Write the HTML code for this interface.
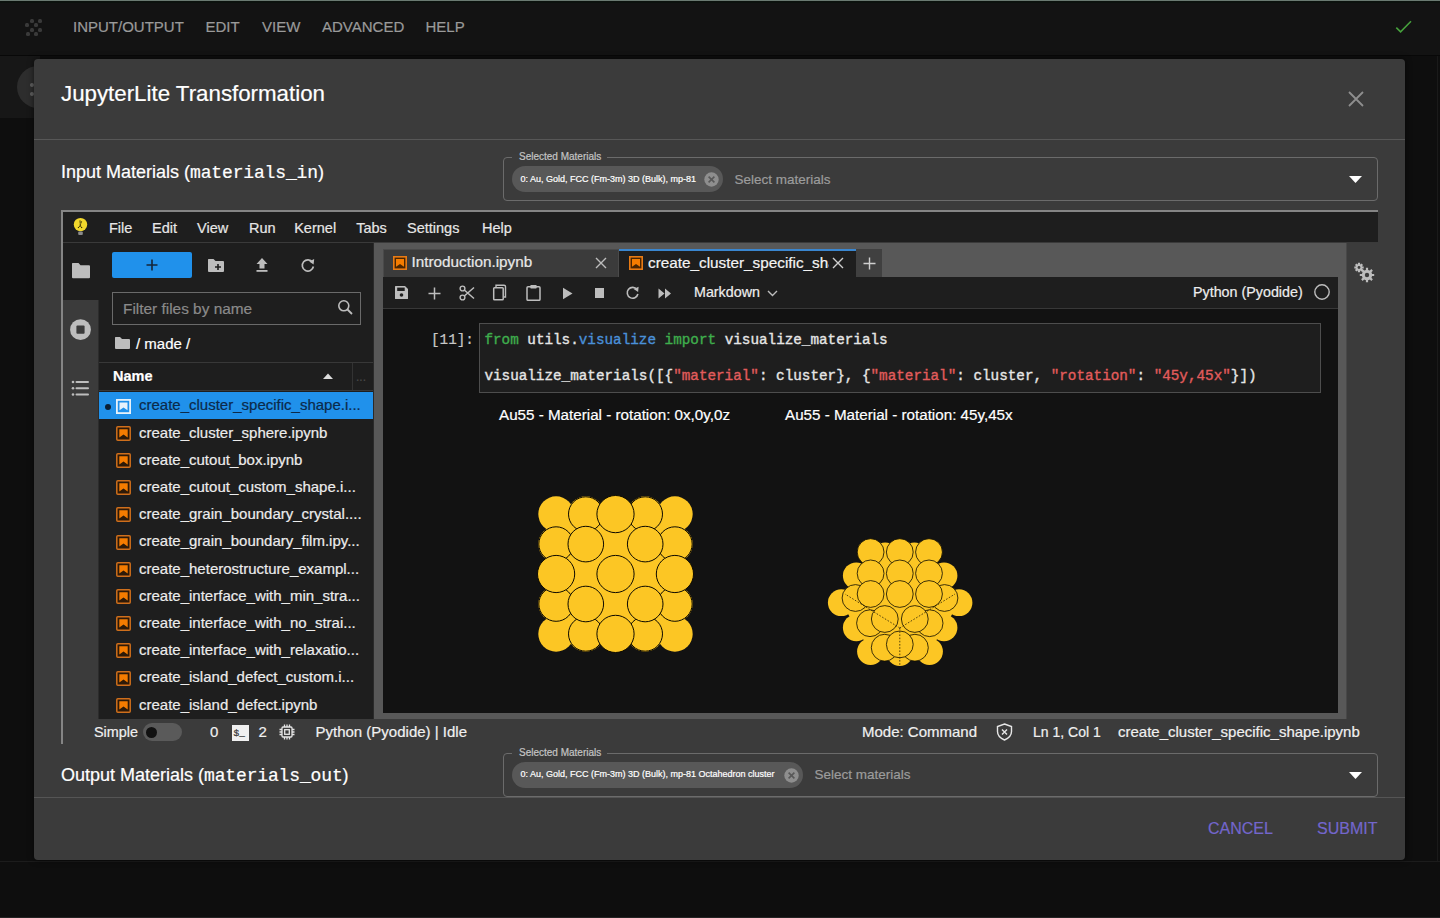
<!DOCTYPE html>
<html><head><meta charset="utf-8"><style>
html,body{margin:0;padding:0;width:1440px;height:918px;overflow:hidden;background:#101010}
.a{position:absolute;box-sizing:border-box}
.t{white-space:pre;-webkit-text-stroke:0.2px currentColor}
</style></head><body>
<div class="a" style="left:0px;top:0px;width:1440px;height:918px;background:#0e0e0e;"></div>
<div class="a" style="left:0px;top:0px;width:1440px;height:55px;background:#131313;"></div>
<div class="a" style="left:0px;top:55px;width:1440px;height:1px;background:#080808;"></div>
<div class="a" style="left:0px;top:0px;width:1440px;height:1px;background:#6b7a72;"></div>
<div class="a" style="left:0px;top:1px;width:1440px;height:2px;background:#0c120e;"></div>
<div class="a" style="left:0px;top:56px;width:40px;height:62px;background:#171717;"></div>
<div class="a" style="left:29.5px;top:18.7px;width:4px;height:4px;background:#3a3a3a;border-radius:1.5px"></div>
<div class="a" style="left:38.4px;top:18.5px;width:4px;height:4px;background:#3a3a3a;border-radius:1.5px"></div>
<div class="a" style="left:25.4px;top:22.9px;width:4px;height:4px;background:#3a3a3a;border-radius:1.5px"></div>
<div class="a" style="left:33.9px;top:23.1px;width:4px;height:4px;background:#3a3a3a;border-radius:1.5px"></div>
<div class="a" style="left:29.9px;top:27.8px;width:4px;height:4px;background:#3a3a3a;border-radius:1.5px"></div>
<div class="a" style="left:38.4px;top:27.8px;width:4px;height:4px;background:#3a3a3a;border-radius:1.5px"></div>
<div class="a" style="left:25.5px;top:32px;width:4px;height:4px;background:#3a3a3a;border-radius:1.5px"></div>
<div class="a" style="left:34.3px;top:32px;width:4px;height:4px;background:#3a3a3a;border-radius:1.5px"></div>
<div class="a t" style="left:73px;top:19.30px;font:normal 15px/15px 'Liberation Sans', sans-serif;color:#9a9a9a;">INPUT/OUTPUT</div>
<div class="a t" style="left:205.5px;top:19.30px;font:normal 15px/15px 'Liberation Sans', sans-serif;color:#9a9a9a;">EDIT</div>
<div class="a t" style="left:262px;top:19.30px;font:normal 15px/15px 'Liberation Sans', sans-serif;color:#9a9a9a;">VIEW</div>
<div class="a t" style="left:322px;top:19.30px;font:normal 15px/15px 'Liberation Sans', sans-serif;color:#9a9a9a;">ADVANCED</div>
<div class="a t" style="left:425.5px;top:19.30px;font:normal 15px/15px 'Liberation Sans', sans-serif;color:#9a9a9a;">HELP</div>
<svg class="a" style="left:1393px;top:18px" width="22" height="18" viewBox="0 0 22 18"><path d="M3.3 9.6 L7.6 13.8 L18 3.3" fill="none" stroke="#46a03c" stroke-width="1.6"/></svg>
<div class="a" style="left:17px;top:66px;width:42px;height:42px;background:#2d2d2d;border-radius:50%"></div>
<div class="a" style="left:29.7px;top:82.8px;width:4px;height:4px;background:#626262;border-radius:50%"></div>
<div class="a" style="left:29.7px;top:91.6px;width:4px;height:4px;background:#626262;border-radius:50%"></div>
<div class="a" style="left:0px;top:861px;width:1440px;height:1px;background:#1c1c1c;"></div>
<div class="a" style="left:1437px;top:56px;width:1px;height:805px;background:#1a1a1a;"></div>
<div class="a" style="left:0px;top:917px;width:1440px;height:1px;background:#242424;"></div>
<div class="a" style="left:34px;top:59px;width:1371px;height:801px;background:#3b3b3b;border-radius:4px;box-shadow:0 0 6px rgba(0,0,0,.6)"></div>
<div class="a t" style="left:61px;top:83.42px;font:normal 22.3px/22.3px 'Liberation Sans', sans-serif;color:#ffffff;">JupyterLite Transformation</div>
<svg class="a" style="left:1347px;top:90px" width="18" height="18" viewBox="0 0 18 18"><path d="M2 2 L16 16 M16 2 L2 16" stroke="#8e8e8e" stroke-width="1.8"/></svg>
<div class="a" style="left:34px;top:139px;width:1371px;height:1px;background:#575757;"></div>
<div class="a t" style="left:61px;top:162.76px;font:18px/18px 'Liberation Sans', sans-serif;color:#fff">Input Materials (<span style="font:18px/18px 'Liberation Mono', monospace;letter-spacing:-0.15px">materials_in</span>)</div>
<div class="a" style="left:503px;top:157px;width:875px;height:44px;border:1px solid #6b6b6b;border-radius:4px"></div>
<div class="a" style="left:512px;top:154px;width:95px;height:6px;background:#3c3c3c;"></div>
<div class="a t" style="left:519px;top:151.53px;font:normal 10px/10px 'Liberation Sans', sans-serif;color:#c4c4c4;">Selected Materials</div>
<div class="a" style="left:512px;top:166px;width:211px;height:26px;background:#585858;border-radius:13px"></div>
<div class="a t" style="left:520.5px;top:175.08px;font:normal 9px/9px 'Liberation Sans', sans-serif;color:#ffffff;letter-spacing:0px">0: Au, Gold, FCC (Fm-3m) 3D (Bulk), mp-81</div>
<svg class="a" style="left:703.5px;top:171.5px" width="15" height="15" viewBox="0 0 15 15"><circle cx="7.5" cy="7.5" r="7.2" fill="#8e8e8e"/><path d="M4.6 4.6 L10.4 10.4 M10.4 4.6 L4.6 10.4" stroke="#585858" stroke-width="1.6"/></svg>
<div class="a t" style="left:734.5px;top:173.07px;font:normal 13.5px/13.5px 'Liberation Sans', sans-serif;color:#9c9c9c;">Select materials</div>
<svg class="a" style="left:1349px;top:175.5px" width="13" height="7" viewBox="0 0 13 7"><path d="M0 0 L13 0 L6.5 7 Z" fill="#fff"/></svg>
<div class="a t" style="left:61px;top:765.76px;font:18px/18px 'Liberation Sans', sans-serif;color:#fff">Output Materials (<span style="font:18px/18px 'Liberation Mono', monospace;letter-spacing:-0.15px">materials_out</span>)</div>
<div class="a" style="left:503px;top:753px;width:875px;height:44px;border:1px solid #6b6b6b;border-radius:4px"></div>
<div class="a" style="left:512px;top:750px;width:95px;height:6px;background:#3c3c3c;"></div>
<div class="a t" style="left:519px;top:747.53px;font:normal 10px/10px 'Liberation Sans', sans-serif;color:#c4c4c4;">Selected Materials</div>
<div class="a" style="left:512px;top:762px;width:291px;height:26px;background:#585858;border-radius:13px"></div>
<div class="a t" style="left:520.5px;top:770.08px;font:normal 9px/9px 'Liberation Sans', sans-serif;color:#ffffff;letter-spacing:0px">0: Au, Gold, FCC (Fm-3m) 3D (Bulk), mp-81 Octahedron cluster</div>
<svg class="a" style="left:783.5px;top:767.5px" width="15" height="15" viewBox="0 0 15 15"><circle cx="7.5" cy="7.5" r="7.2" fill="#8e8e8e"/><path d="M4.6 4.6 L10.4 10.4 M10.4 4.6 L4.6 10.4" stroke="#585858" stroke-width="1.6"/></svg>
<div class="a t" style="left:814.5px;top:768.07px;font:normal 13.5px/13.5px 'Liberation Sans', sans-serif;color:#9c9c9c;">Select materials</div>
<svg class="a" style="left:1349px;top:771.5px" width="13" height="7" viewBox="0 0 13 7"><path d="M0 0 L13 0 L6.5 7 Z" fill="#fff"/></svg>
<div class="a" style="left:34px;top:797px;width:1371px;height:1px;background:#555555;"></div>
<div class="a t" style="left:1208px;top:821.16px;font:normal 16px/16px 'Liberation Sans', sans-serif;color:#7366cc;">CANCEL</div>
<div class="a t" style="left:1317px;top:821.16px;font:normal 16px/16px 'Liberation Sans', sans-serif;color:#7366cc;">SUBMIT</div>
<div class="a" style="left:61px;top:210px;width:2px;height:534px;background:#858585;"></div>
<div class="a" style="left:61px;top:210px;width:1317px;height:2px;background:#858585;"></div>
<div class="a" style="left:63px;top:212px;width:1315px;height:30px;background:#1e1e1e;"></div>
<div class="a" style="left:63px;top:242px;width:1315px;height:1px;background:#3a3a3a;"></div>
<svg class="a" style="left:72px;top:217px" width="18" height="20" viewBox="0 0 18 20"><circle cx="8.5" cy="7.6" r="6.7" fill="#f2d82c"/><rect x="6.2" y="14.6" width="4.6" height="3.4" rx="1" fill="#8a8a8a"/><path d="M8 3.5 L8.3 8.5 L6 11 M8.3 8.5 L10 11 M9.7 4.5 L8.7 6.5" stroke="#2a2200" stroke-width="1.1" stroke-dasharray="1.2,0.6" fill="none"/></svg>
<div class="a t" style="left:109.0px;top:221.23px;font:normal 14.5px/14.5px 'Liberation Sans', sans-serif;color:#e6e6e6;">File</div>
<div class="a t" style="left:152.0px;top:221.23px;font:normal 14.5px/14.5px 'Liberation Sans', sans-serif;color:#e6e6e6;">Edit</div>
<div class="a t" style="left:197.0px;top:221.23px;font:normal 14.5px/14.5px 'Liberation Sans', sans-serif;color:#e6e6e6;">View</div>
<div class="a t" style="left:249.0px;top:221.23px;font:normal 14.5px/14.5px 'Liberation Sans', sans-serif;color:#e6e6e6;">Run</div>
<div class="a t" style="left:294.2px;top:221.23px;font:normal 14.5px/14.5px 'Liberation Sans', sans-serif;color:#e6e6e6;">Kernel</div>
<div class="a t" style="left:356.2px;top:221.23px;font:normal 14.5px/14.5px 'Liberation Sans', sans-serif;color:#e6e6e6;">Tabs</div>
<div class="a t" style="left:407.0px;top:221.23px;font:normal 14.5px/14.5px 'Liberation Sans', sans-serif;color:#e6e6e6;">Settings</div>
<div class="a t" style="left:482.0px;top:221.23px;font:normal 14.5px/14.5px 'Liberation Sans', sans-serif;color:#e6e6e6;">Help</div>
<div class="a" style="left:63px;top:243px;width:36px;height:476px;background:#3b3b3b;"></div>
<div class="a" style="left:63px;top:243px;width:36px;height:57px;background:#1e1e1e;"></div>
<div class="a" style="left:98px;top:300px;width:1px;height:419px;background:#2c2c2c;"></div>
<div class="a" style="left:99px;top:243px;width:275px;height:476px;background:#1e1e1e;"></div>
<div class="a" style="left:374px;top:243px;width:972px;height:476px;background:#585858;"></div>
<div class="a" style="left:1346px;top:243px;width:32px;height:476px;background:#3b3b3b;"></div>
<div class="a" style="left:1346px;top:243px;width:1px;height:476px;background:#484848;"></div>
<svg class="a" style="left:71px;top:262px" width="20" height="17" viewBox="0 0 20 17"><path d="M1.5 1 H7.5 L9.5 3.2 H18 Q19 3.2 19 4.2 V15.2 Q19 16.2 18 16.2 H2 Q1 16.2 1 15.2 V2 Q1 1 1.5 1 Z" fill="#bdbdbd"/></svg>
<svg class="a" style="left:70px;top:319px" width="22" height="22" viewBox="0 0 22 22"><circle cx="10.5" cy="10.7" r="10.4" fill="#bdbdbd"/><rect x="6.4" y="6.6" width="8.2" height="8.2" rx="1" fill="#3b3b3b"/></svg>
<svg class="a" style="left:71px;top:380px" width="19" height="17" viewBox="0 0 19 17"><g fill="#bdbdbd"><circle cx="2" cy="2" r="1.3"/><circle cx="2" cy="8.2" r="1.3"/><circle cx="2" cy="14.5" r="1.3"/><rect x="4.5" y="1" width="13.5" height="2" rx="1"/><rect x="4.5" y="7.2" width="13.5" height="2" rx="1"/><rect x="4.5" y="13.5" width="13.5" height="2" rx="1"/></g></svg>
<div class="a" style="left:112px;top:252px;width:80px;height:26px;background:#2091eb;border-radius:2px"></div>
<svg class="a" style="left:146px;top:259px" width="12" height="12" viewBox="0 0 12 12"><path d="M6 0.5 V11.5 M0.5 6 H11.5" stroke="#15263a" stroke-width="1.6"/></svg>
<svg class="a" style="left:207px;top:258px" width="18" height="15" viewBox="0 0 18 15"><path d="M1.5 1 H6.5 L8.5 3 H16 Q17 3 17 4 V13 Q17 14 16 14 H2 Q1 14 1 13 V2 Q1 1 1.5 1 Z" fill="#bdbdbd"/><path d="M11 6 V12 M8 9 H14" stroke="#1e1e1e" stroke-width="1.6"/></svg>
<svg class="a" style="left:255px;top:257px" width="14" height="16" viewBox="0 0 14 16"><path d="M7 1 L1.5 7 H4.5 V11.5 H9.5 V7 H12.5 Z" fill="#bdbdbd"/><rect x="1.5" y="13" width="11" height="1.8" fill="#bdbdbd"/></svg>
<svg class="a" style="left:300px;top:257px" width="16" height="16" viewBox="0 0 16 16"><path d="M12.5 5.2 A5.6 5.6 0 1 0 13.4 9.5" fill="none" stroke="#bdbdbd" stroke-width="1.7"/><path d="M9.2 4.5 L14.2 2 L13.6 7.4 Z" fill="#bdbdbd"/></svg>
<div class="a" style="left:112px;top:292px;width:249px;height:33px;border:1px solid #6a6a6a"></div>
<div class="a t" style="left:123px;top:300.96px;font:normal 15.4px/15.4px 'Liberation Sans', sans-serif;color:#8a8a8a;">Filter files by name</div>
<svg class="a" style="left:337px;top:299px" width="17" height="17" viewBox="0 0 17 17"><circle cx="6.8" cy="6.8" r="5" fill="none" stroke="#bdbdbd" stroke-width="1.6"/><path d="M10.5 10.5 L15 15" stroke="#bdbdbd" stroke-width="1.8"/></svg>
<svg class="a" style="left:114px;top:336px" width="17" height="14" viewBox="0 0 17 14"><path d="M1.5 1 H6 L8 3 H15 Q16 3 16 4 V12 Q16 13 15 13 H2 Q1 13 1 12 V2 Q1 1 1.5 1 Z" fill="#bdbdbd"/></svg>
<div class="a t" style="left:136px;top:336.10px;font:normal 15px/15px 'Liberation Sans', sans-serif;color:#ffffff;">/ made /</div>
<div class="a" style="left:99px;top:362px;width:275px;height:1px;background:#383838;"></div>
<div class="a" style="left:99px;top:390px;width:275px;height:1px;background:#383838;"></div>
<div class="a t" style="left:113px;top:369.23px;font:bold 14.5px/14.5px 'Liberation Sans', sans-serif;color:#ffffff;">Name</div>
<svg class="a" style="left:323px;top:373px" width="10" height="6" viewBox="0 0 10 6"><path d="M0 6 L5 0.5 L10 6 Z" fill="#dcdcdc"/></svg>
<div class="a" style="left:352px;top:363px;width:1px;height:27px;background:#333;"></div>
<div class="a t" style="left:356px;top:370.84px;font:normal 12px/12px 'Liberation Sans', sans-serif;color:#4a4a4a;">...</div>
<div class="a" style="left:99px;top:391.9px;width:275px;height:27.2px;background:#2091eb;"></div>
<div class="a" style="left:105px;top:403.59999999999997px;width:6px;height:6px;background:#0a1f36;border-radius:50%"></div>
<svg class="a" style="left:116px;top:398.5px" width="15" height="15" viewBox="0 0 15 15"><rect x="0.9" y="0.9" width="13.2" height="13.2" fill="none" stroke="#e8f2fb" stroke-width="1.8"/><path d="M3.5 3.5 H11.5 V11.3 L7.5 8.6 L3.5 11.3 Z" fill="#e8f2fb"/></svg>
<div class="a t" style="left:139px;top:397.30px;font:normal 15px/15px 'Liberation Sans', sans-serif;color:#0c2a4a;">create_cluster_specific_shape.i...</div>
<svg class="a" style="left:116px;top:425.7px" width="15" height="15" viewBox="0 0 15 15"><rect x="0.8" y="0.8" width="13.4" height="13.4" rx="1" fill="#2e1a08" stroke="#cf6f1c" stroke-width="1.5"/><path d="M3.3 3.3 H11.7 V11.5 L7.5 8.4 L3.3 11.5 Z" fill="#f57c00"/></svg>
<div class="a t" style="left:139px;top:424.50px;font:normal 15px/15px 'Liberation Sans', sans-serif;color:#ececec;">create_cluster_sphere.ipynb</div>
<svg class="a" style="left:116px;top:452.9px" width="15" height="15" viewBox="0 0 15 15"><rect x="0.8" y="0.8" width="13.4" height="13.4" rx="1" fill="#2e1a08" stroke="#cf6f1c" stroke-width="1.5"/><path d="M3.3 3.3 H11.7 V11.5 L7.5 8.4 L3.3 11.5 Z" fill="#f57c00"/></svg>
<div class="a t" style="left:139px;top:451.70px;font:normal 15px/15px 'Liberation Sans', sans-serif;color:#ececec;">create_cutout_box.ipynb</div>
<svg class="a" style="left:116px;top:480.1px" width="15" height="15" viewBox="0 0 15 15"><rect x="0.8" y="0.8" width="13.4" height="13.4" rx="1" fill="#2e1a08" stroke="#cf6f1c" stroke-width="1.5"/><path d="M3.3 3.3 H11.7 V11.5 L7.5 8.4 L3.3 11.5 Z" fill="#f57c00"/></svg>
<div class="a t" style="left:139px;top:478.90px;font:normal 15px/15px 'Liberation Sans', sans-serif;color:#ececec;">create_cutout_custom_shape.i...</div>
<svg class="a" style="left:116px;top:507.3px" width="15" height="15" viewBox="0 0 15 15"><rect x="0.8" y="0.8" width="13.4" height="13.4" rx="1" fill="#2e1a08" stroke="#cf6f1c" stroke-width="1.5"/><path d="M3.3 3.3 H11.7 V11.5 L7.5 8.4 L3.3 11.5 Z" fill="#f57c00"/></svg>
<div class="a t" style="left:139px;top:506.10px;font:normal 15px/15px 'Liberation Sans', sans-serif;color:#ececec;">create_grain_boundary_crystal....</div>
<svg class="a" style="left:116px;top:534.5px" width="15" height="15" viewBox="0 0 15 15"><rect x="0.8" y="0.8" width="13.4" height="13.4" rx="1" fill="#2e1a08" stroke="#cf6f1c" stroke-width="1.5"/><path d="M3.3 3.3 H11.7 V11.5 L7.5 8.4 L3.3 11.5 Z" fill="#f57c00"/></svg>
<div class="a t" style="left:139px;top:533.30px;font:normal 15px/15px 'Liberation Sans', sans-serif;color:#ececec;">create_grain_boundary_film.ipy...</div>
<svg class="a" style="left:116px;top:561.7px" width="15" height="15" viewBox="0 0 15 15"><rect x="0.8" y="0.8" width="13.4" height="13.4" rx="1" fill="#2e1a08" stroke="#cf6f1c" stroke-width="1.5"/><path d="M3.3 3.3 H11.7 V11.5 L7.5 8.4 L3.3 11.5 Z" fill="#f57c00"/></svg>
<div class="a t" style="left:139px;top:560.50px;font:normal 15px/15px 'Liberation Sans', sans-serif;color:#ececec;">create_heterostructure_exampl...</div>
<svg class="a" style="left:116px;top:588.9px" width="15" height="15" viewBox="0 0 15 15"><rect x="0.8" y="0.8" width="13.4" height="13.4" rx="1" fill="#2e1a08" stroke="#cf6f1c" stroke-width="1.5"/><path d="M3.3 3.3 H11.7 V11.5 L7.5 8.4 L3.3 11.5 Z" fill="#f57c00"/></svg>
<div class="a t" style="left:139px;top:587.70px;font:normal 15px/15px 'Liberation Sans', sans-serif;color:#ececec;">create_interface_with_min_stra...</div>
<svg class="a" style="left:116px;top:616.1px" width="15" height="15" viewBox="0 0 15 15"><rect x="0.8" y="0.8" width="13.4" height="13.4" rx="1" fill="#2e1a08" stroke="#cf6f1c" stroke-width="1.5"/><path d="M3.3 3.3 H11.7 V11.5 L7.5 8.4 L3.3 11.5 Z" fill="#f57c00"/></svg>
<div class="a t" style="left:139px;top:614.90px;font:normal 15px/15px 'Liberation Sans', sans-serif;color:#ececec;">create_interface_with_no_strai...</div>
<svg class="a" style="left:116px;top:643.3px" width="15" height="15" viewBox="0 0 15 15"><rect x="0.8" y="0.8" width="13.4" height="13.4" rx="1" fill="#2e1a08" stroke="#cf6f1c" stroke-width="1.5"/><path d="M3.3 3.3 H11.7 V11.5 L7.5 8.4 L3.3 11.5 Z" fill="#f57c00"/></svg>
<div class="a t" style="left:139px;top:642.10px;font:normal 15px/15px 'Liberation Sans', sans-serif;color:#ececec;">create_interface_with_relaxatio...</div>
<svg class="a" style="left:116px;top:670.5px" width="15" height="15" viewBox="0 0 15 15"><rect x="0.8" y="0.8" width="13.4" height="13.4" rx="1" fill="#2e1a08" stroke="#cf6f1c" stroke-width="1.5"/><path d="M3.3 3.3 H11.7 V11.5 L7.5 8.4 L3.3 11.5 Z" fill="#f57c00"/></svg>
<div class="a t" style="left:139px;top:669.30px;font:normal 15px/15px 'Liberation Sans', sans-serif;color:#ececec;">create_island_defect_custom.i...</div>
<svg class="a" style="left:116px;top:697.7px" width="15" height="15" viewBox="0 0 15 15"><rect x="0.8" y="0.8" width="13.4" height="13.4" rx="1" fill="#2e1a08" stroke="#cf6f1c" stroke-width="1.5"/><path d="M3.3 3.3 H11.7 V11.5 L7.5 8.4 L3.3 11.5 Z" fill="#f57c00"/></svg>
<div class="a t" style="left:139px;top:696.50px;font:normal 15px/15px 'Liberation Sans', sans-serif;color:#ececec;">create_island_defect.ipynb</div>
<div class="a" style="left:373px;top:243px;width:1px;height:476px;background:#2a2a2a;"></div>
<div class="a" style="left:383px;top:249px;width:236px;height:28px;background:#3b3b3b;"></div>
<div class="a" style="left:383px;top:249px;width:236px;height:28px;border:1px solid #4a4a4a;border-bottom:none"></div>
<svg class="a" style="left:392.5px;top:255.5px" width="14" height="14" viewBox="0 0 14 14"><rect x="0.8" y="0.8" width="12.4" height="12.4" fill="#4a2500" stroke="#e87b14" stroke-width="1.6"/><path d="M3 3 H11 V10.8 L7 8 L3 10.8 Z" fill="#f57c00"/></svg>
<div class="a t" style="left:411.5px;top:254.05px;font:normal 15.3px/15.3px 'Liberation Sans', sans-serif;color:#e8e8e8;">Introduction.ipynb</div>
<svg class="a" style="left:595px;top:257px" width="12" height="12" viewBox="0 0 12 12"><path d="M1 1 L11 11 M11 1 L1 11" stroke="#bdbdbd" stroke-width="1.4"/></svg>
<div class="a" style="left:619px;top:249px;width:237px;height:28px;background:#1e1e1e;"></div>
<div class="a" style="left:619px;top:249px;width:237px;height:2px;background:#3a86cf;"></div>
<svg class="a" style="left:628.5px;top:256px" width="14" height="14" viewBox="0 0 14 14"><rect x="0.8" y="0.8" width="12.4" height="12.4" fill="#4a2500" stroke="#e87b14" stroke-width="1.6"/><path d="M3 3 H11 V10.8 L7 8 L3 10.8 Z" fill="#f57c00"/></svg>
<div class="a" style="left:648px;top:252px;width:181px;height:22px;overflow:hidden"><div class="a t" style="left:0;top:3.3px;font:15.3px/15.3px 'Liberation Sans', sans-serif;color:#f4f4f4">create_cluster_specific_shape.ipynb</div></div>
<svg class="a" style="left:832px;top:257px" width="12" height="12" viewBox="0 0 12 12"><path d="M1 1 L11 11 M11 1 L1 11" stroke="#cfcfcf" stroke-width="1.4"/></svg>
<div class="a" style="left:856px;top:249px;width:26px;height:28px;background:#404040;"></div>
<svg class="a" style="left:862.5px;top:256.5px" width="13" height="13" viewBox="0 0 13 13"><path d="M6.5 0.5 V12.5 M0.5 6.5 H12.5" stroke="#cfcfcf" stroke-width="1.4"/></svg>
<div class="a" style="left:383px;top:277px;width:955px;height:436px;background:#121212;"></div>
<div class="a" style="left:383px;top:277px;width:955px;height:31px;background:#1e1e1e;"></div>
<div class="a" style="left:383px;top:308px;width:955px;height:1px;background:#383838;"></div>
<svg class="a" style="left:394px;top:285px" width="15" height="15" viewBox="0 0 15 15"><path d="M1.5 1 H11 L14 4 V13.5 Q14 14 13.5 14 H1.5 Q1 14 1 13.5 V1.5 Q1 1 1.5 1 Z" fill="#bdbdbd"/><rect x="3.2" y="2.6" width="7.5" height="3.4" fill="#1e1e1e"/><circle cx="7.5" cy="10" r="1.8" fill="#1e1e1e"/></svg>
<svg class="a" style="left:428px;top:287px" width="13" height="13" viewBox="0 0 13 13"><path d="M6.5 0.5 V12.5 M0.5 6.5 H12.5" stroke="#bdbdbd" stroke-width="1.5"/></svg>
<svg class="a" style="left:459px;top:285px" width="16" height="16" viewBox="0 0 16 16"><circle cx="3.5" cy="3.5" r="2.4" fill="none" stroke="#bdbdbd" stroke-width="1.4"/><circle cx="3.5" cy="12.5" r="2.4" fill="none" stroke="#bdbdbd" stroke-width="1.4"/><path d="M5.3 5 L15 13.5 M5.3 11 L15 2.5" stroke="#bdbdbd" stroke-width="1.5"/></svg>
<svg class="a" style="left:492px;top:284px" width="16" height="17" viewBox="0 0 16 17"><path d="M4 3 V1.2 H12 Q13.5 1.2 13.5 2.5 V13 H11.8" fill="none" stroke="#bdbdbd" stroke-width="1.4"/><rect x="1.7" y="3.8" width="9.5" height="12" rx="0.8" fill="none" stroke="#bdbdbd" stroke-width="1.5"/></svg>
<svg class="a" style="left:526px;top:284px" width="15" height="17" viewBox="0 0 15 17"><rect x="1" y="2.8" width="13" height="13.5" rx="1" fill="none" stroke="#bdbdbd" stroke-width="1.5"/><rect x="4.3" y="1" width="6.4" height="3.6" rx="0.8" fill="#bdbdbd"/></svg>
<svg class="a" style="left:562px;top:287px" width="11" height="13" viewBox="0 0 11 13"><path d="M1 0.8 L10.5 6.5 L1 12.2 Z" fill="#bdbdbd"/></svg>
<div class="a" style="left:594.5px;top:288px;width:9.5px;height:9.5px;background:#bdbdbd;"></div>
<svg class="a" style="left:625px;top:285px" width="15" height="15" viewBox="0 0 15 15"><path d="M12 4.6 A5.4 5.4 0 1 0 12.9 9" fill="none" stroke="#bdbdbd" stroke-width="1.6"/><path d="M8.6 4 L13.6 1.8 L13.1 7 Z" fill="#bdbdbd"/></svg>
<svg class="a" style="left:658px;top:287.5px" width="14" height="11" viewBox="0 0 14 11"><path d="M0.5 0.5 L6.5 5.5 L0.5 10.5 Z M7 0.5 L13 5.5 L7 10.5 Z" fill="#bdbdbd"/></svg>
<div class="a t" style="left:694px;top:285.40px;font:normal 14.3px/14.3px 'Liberation Sans', sans-serif;color:#ededed;">Markdown</div>
<svg class="a" style="left:767px;top:290px" width="11" height="7" viewBox="0 0 11 7"><path d="M1 1 L5.5 5.5 L10 1" fill="none" stroke="#bdbdbd" stroke-width="1.4"/></svg>
<div class="a t" style="left:1193px;top:285.40px;font:normal 14.3px/14.3px 'Liberation Sans', sans-serif;color:#ededed;">Python (Pyodide)</div>
<svg class="a" style="left:1313px;top:283px" width="18" height="18" viewBox="0 0 18 18"><circle cx="9" cy="9" r="7.2" fill="none" stroke="#bdbdbd" stroke-width="1.4"/></svg>
<svg class="a" style="left:1354px;top:262px" width="22" height="22" viewBox="0 0 22 22"><g fill="#bdbdbd"><circle cx="5" cy="5.5" r="3.3"/><circle cx="13" cy="13" r="5.2"/></g><g stroke="#bdbdbd" stroke-width="2.2"><path d="M5 0.8 V10.2 M0.3 5.5 H9.7 M1.7 2.2 L8.3 8.8 M8.3 2.2 L1.7 8.8"/><path d="M13 5.8 V20.2 M5.8 13 H20.2 M7.9 7.9 L18.1 18.1 M18.1 7.9 L7.9 18.1"/></g><circle cx="5" cy="5.5" r="1.4" fill="#3c3c3c"/><circle cx="13" cy="13" r="2.2" fill="#3c3c3c"/></svg>
<div class="a t" style="left:431px;top:332.54px;font:normal 14.3px/14.3px 'Liberation Mono', monospace;color:#c8c8c8;">[11]:</div>
<div class="a" style="left:479px;top:323px;width:842px;height:70px;background:#1e1e1e;border:1px solid #4d4d4d"></div>
<div class="a t" style="left:484.4px;top:332.54px;font:14.3px/14.3px 'Liberation Mono', monospace;color:#e6e6e6;-webkit-text-stroke:0.35px currentColor"><span style="color:#3fae4d">from</span><span style="color:#e6e6e6"> utils.</span><span style="color:#4a90d9">visualize</span><span style="color:#e6e6e6"> </span><span style="color:#3fae4d">import</span><span style="color:#e6e6e6"> visualize_materials</span></div>
<div class="a t" style="left:484.4px;top:369.04px;font:14.3px/14.3px 'Liberation Mono', monospace;color:#e6e6e6;-webkit-text-stroke:0.35px currentColor"><span style="color:#e6e6e6">visualize_materials([{</span><span style="color:#e25c5c">&quot;material&quot;</span><span style="color:#e6e6e6">: cluster}, {</span><span style="color:#e25c5c">&quot;material&quot;</span><span style="color:#e6e6e6">: cluster, </span><span style="color:#e25c5c">&quot;rotation&quot;</span><span style="color:#e6e6e6">: </span><span style="color:#e25c5c">&quot;45y,45x&quot;</span><span style="color:#e6e6e6">}])</span></div>
<div class="a t" style="left:499px;top:407.13px;font:normal 15.2px/15.2px 'Liberation Sans', sans-serif;color:#ffffff;">Au55 - Material - rotation: 0x,0y,0z</div>
<div class="a t" style="left:785px;top:407.13px;font:normal 15.2px/15.2px 'Liberation Sans', sans-serif;color:#ffffff;">Au55 - Material - rotation: 45y,45x</div>
<div class="a" style="left:557px;top:515px;width:118px;height:119px;background:#fcc624"></div>
<svg class="a" style="left:0;top:0" width="1440" height="918" viewBox="0 0 1440 918"><circle cx="556.1" cy="514.1" r="17.8" fill="#fcc624"/><circle cx="585.8" cy="514.1" r="17.8" fill="#fcc624"/><circle cx="645.2" cy="514.1" r="17.8" fill="#fcc624"/><circle cx="674.9" cy="514.1" r="17.8" fill="#fcc624"/><circle cx="556.1" cy="544.1" r="17.8" fill="#fcc624"/><circle cx="615.5" cy="544.1" r="17.8" fill="#fcc624"/><circle cx="674.9" cy="544.1" r="17.8" fill="#fcc624"/><circle cx="585.8" cy="574.0" r="17.8" fill="#fcc624"/><circle cx="645.2" cy="574.0" r="17.8" fill="#fcc624"/><circle cx="556.1" cy="604.0" r="17.8" fill="#fcc624"/><circle cx="615.5" cy="604.0" r="17.8" fill="#fcc624"/><circle cx="674.9" cy="604.0" r="17.8" fill="#fcc624"/><circle cx="556.1" cy="633.9" r="17.8" fill="#fcc624"/><circle cx="585.8" cy="633.9" r="17.8" fill="#fcc624"/><circle cx="645.2" cy="633.9" r="17.8" fill="#fcc624"/><circle cx="674.9" cy="633.9" r="17.8" fill="#fcc624"/><circle cx="585.8" cy="514.1" r="17.3" fill="#fcc624" stroke="#0d0a00" stroke-width="1"/><circle cx="645.2" cy="514.1" r="17.3" fill="#fcc624" stroke="#0d0a00" stroke-width="1"/><circle cx="556.1" cy="544.1" r="17.3" fill="#fcc624" stroke="#0d0a00" stroke-width="1"/><circle cx="674.9" cy="544.1" r="17.3" fill="#fcc624" stroke="#0d0a00" stroke-width="1"/><circle cx="556.1" cy="604.0" r="17.3" fill="#fcc624" stroke="#0d0a00" stroke-width="1"/><circle cx="674.9" cy="604.0" r="17.3" fill="#fcc624" stroke="#0d0a00" stroke-width="1"/><circle cx="585.8" cy="633.9" r="17.3" fill="#fcc624" stroke="#0d0a00" stroke-width="1"/><circle cx="645.2" cy="633.9" r="17.3" fill="#fcc624" stroke="#0d0a00" stroke-width="1"/><circle cx="615.5" cy="633.9" r="18.6" fill="#fcc624" stroke="#0d0a00" stroke-width="1"/><circle cx="645.2" cy="544.1" r="17.8" fill="#fcc624" stroke="#0d0a00" stroke-width="1"/><circle cx="585.8" cy="544.1" r="17.8" fill="#fcc624" stroke="#0d0a00" stroke-width="1"/><circle cx="615.5" cy="514.1" r="18.6" fill="#fcc624" stroke="#0d0a00" stroke-width="1"/><circle cx="674.9" cy="574.0" r="18.6" fill="#fcc624" stroke="#0d0a00" stroke-width="1"/><circle cx="556.1" cy="574.0" r="18.6" fill="#fcc624" stroke="#0d0a00" stroke-width="1"/><circle cx="645.2" cy="604.0" r="17.8" fill="#fcc624" stroke="#0d0a00" stroke-width="1"/><circle cx="615.5" cy="574.0" r="18.6" fill="#fcc624" stroke="#0d0a00" stroke-width="1"/><circle cx="585.8" cy="604.0" r="17.8" fill="#fcc624" stroke="#0d0a00" stroke-width="1"/></svg>
<svg class="a" style="left:0;top:0" width="1440" height="918"><polygon points="870.6,552 929,552 944,575.8 959,602.7 944,627.8 929.5,651.6 899.8,652.5 870.5,651.6 856.3,627.8 841.3,602.7 856.3,575.8" fill="#fcc624"/></svg>
<svg class="a" style="left:0;top:0" width="1440" height="918" viewBox="0 0 1440 918"><circle cx="856.3" cy="575.8" r="13.4" fill="#fcc624"/><circle cx="944.0" cy="575.8" r="13.4" fill="#fcc624"/><circle cx="841.3" cy="602.7" r="13.4" fill="#fcc624"/><circle cx="959.0" cy="602.7" r="13.4" fill="#fcc624"/><circle cx="856.3" cy="627.8" r="13.4" fill="#fcc624"/><circle cx="944.0" cy="627.8" r="13.4" fill="#fcc624"/><circle cx="870.5" cy="651.6" r="13.4" fill="#fcc624"/><circle cx="929.5" cy="651.6" r="13.4" fill="#fcc624"/><circle cx="899.8" cy="652.5" r="13.4" fill="#fcc624"/><circle cx="885.2" cy="556.0" r="13.4" fill="#fcc624"/><circle cx="914.4" cy="556.0" r="13.4" fill="#fcc624"/><circle cx="855.5" cy="598.0" r="13.4" fill="#fcc624" stroke="#0d0a00" stroke-width="0.8"/><circle cx="944.5" cy="598.0" r="13.4" fill="#fcc624" stroke="#0d0a00" stroke-width="0.8"/><circle cx="870.0" cy="623.2" r="13.4" fill="#fcc624" stroke="#0d0a00" stroke-width="0.8"/><circle cx="929.6" cy="623.2" r="13.4" fill="#fcc624" stroke="#0d0a00" stroke-width="0.8"/><circle cx="884.7" cy="647.7" r="13.4" fill="#fcc624" stroke="#0d0a00" stroke-width="0.8"/><circle cx="914.9" cy="647.7" r="13.4" fill="#fcc624" stroke="#0d0a00" stroke-width="0.8"/><circle cx="870.6" cy="552.1" r="13.4" fill="#fcc624" stroke="#0d0a00" stroke-width="0.8"/><circle cx="899.8" cy="552.1" r="13.4" fill="#fcc624" stroke="#0d0a00" stroke-width="0.8"/><circle cx="929.0" cy="552.1" r="13.4" fill="#fcc624" stroke="#0d0a00" stroke-width="0.8"/><circle cx="870.6" cy="573.4" r="13.4" fill="#fcc624" stroke="#0d0a00" stroke-width="0.8"/><circle cx="899.8" cy="573.4" r="13.4" fill="#fcc624" stroke="#0d0a00" stroke-width="0.8"/><circle cx="929.0" cy="573.4" r="13.4" fill="#fcc624" stroke="#0d0a00" stroke-width="0.8"/><circle cx="870.6" cy="594.0" r="13.4" fill="#fcc624" stroke="#0d0a00" stroke-width="0.8"/><circle cx="899.8" cy="594.0" r="13.4" fill="#fcc624" stroke="#0d0a00" stroke-width="0.8"/><circle cx="929.0" cy="594.0" r="13.4" fill="#fcc624" stroke="#0d0a00" stroke-width="0.8"/><circle cx="884.8" cy="619.0" r="13.4" fill="#fcc624" stroke="#0d0a00" stroke-width="0.8"/><circle cx="914.8" cy="619.0" r="13.4" fill="#fcc624" stroke="#0d0a00" stroke-width="0.8"/><circle cx="899.8" cy="644.4" r="13.4" fill="#fcc624" stroke="#0d0a00" stroke-width="0.8"/></svg>
<svg class="a" style="left:0;top:0" width="1440" height="918"><path d="M899.8 628 L845 594 M899.8 628 L955 594 M899.8 628 L899.8 665" stroke="#0d0a00" stroke-width="0.7" stroke-dasharray="1.6,1.6" fill="none"/></svg>
<div class="a t" style="left:94px;top:724.81px;font:normal 14.4px/14.4px 'Liberation Sans', sans-serif;color:#f0f0f0;">Simple</div>
<div class="a" style="left:143px;top:723px;width:39px;height:18px;background:#5a5a5a;border-radius:9px"></div>
<div class="a" style="left:145.5px;top:726.5px;width:11px;height:11px;background:#111111;border-radius:50%"></div>
<div class="a t" style="left:210px;top:724.30px;font:normal 15px/15px 'Liberation Sans', sans-serif;color:#f0f0f0;">0</div>
<div class="a" style="left:231.5px;top:724.5px;width:17px;height:16px;background:#f0f0f0;"></div>
<div class="a t" style="left:233.5px;top:728.72px;font:normal 9.5px/9.5px 'Liberation Mono', monospace;color:#333333;">$_</div>
<div class="a t" style="left:258.5px;top:724.30px;font:normal 15px/15px 'Liberation Sans', sans-serif;color:#f0f0f0;">2</div>
<svg class="a" style="left:279px;top:724px" width="16" height="16" viewBox="0 0 16 16"><g stroke="#e6e6e6" stroke-width="1.3" fill="none"><rect x="3" y="3" width="10" height="10" rx="1"/><rect x="5.7" y="5.7" width="4.6" height="4.6"/><path d="M5.5 0.5 V3 M8 0.5 V3 M10.5 0.5 V3 M5.5 13 V15.5 M8 13 V15.5 M10.5 13 V15.5 M0.5 5.5 H3 M0.5 8 H3 M0.5 10.5 H3 M13 5.5 H15.5 M13 8 H15.5 M13 10.5 H15.5"/></g></svg>
<div class="a t" style="left:315.5px;top:724.30px;font:normal 15px/15px 'Liberation Sans', sans-serif;color:#f0f0f0;">Python (Pyodide) | Idle</div>
<div class="a t" style="left:862px;top:724.30px;font:normal 15px/15px 'Liberation Sans', sans-serif;color:#f0f0f0;">Mode: Command</div>
<svg class="a" style="left:996px;top:723px" width="17" height="18" viewBox="0 0 17 18"><path d="M8.5 1 L15.5 3.6 V8.5 Q15.5 14 8.5 17 Q1.5 14 1.5 8.5 V3.6 Z" fill="none" stroke="#e6e6e6" stroke-width="1.4"/><path d="M6 6.5 L11 11.5 M11 6.5 L6 11.5" stroke="#e6e6e6" stroke-width="1.4"/></svg>
<div class="a t" style="left:1033px;top:725.15px;font:normal 14px/14px 'Liberation Sans', sans-serif;color:#f0f0f0;">Ln 1, Col 1</div>
<div class="a t" style="left:1118px;top:724.30px;font:normal 15px/15px 'Liberation Sans', sans-serif;color:#f0f0f0;">create_cluster_specific_shape.ipynb</div>
</body></html>
